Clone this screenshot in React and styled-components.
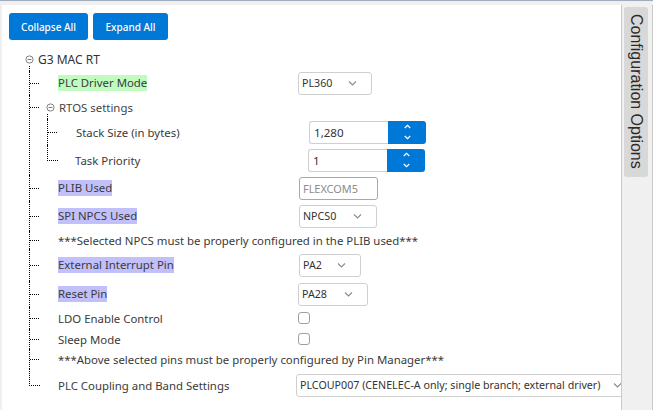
import React from "react";
import styled, { createGlobalStyle } from "styled-components";

const GlobalStyle = createGlobalStyle`
  html, body {
    margin: 0;
    padding: 0;
    background: #fff;
  }
  body {
    font-family: "Noto Sans", "Open Sans", sans-serif;
  }
`;

const Toggle = () => (
  <ToggleIcon width="9" height="9" viewBox="0 0 9 9">
    <circle cx="4.5" cy="4.5" r="3.6" fill="none" stroke="#707070" strokeWidth="0.9" />
    <line x1="2.6" y1="4.5" x2="6.4" y2="4.5" stroke="#707070" strokeWidth="0.9" />
  </ToggleIcon>
);

const Chevron = ({ color = "#8a8a8a", up, w = 9, sw = 1.1 }) => (
  <svg width={w} height="5" viewBox="0 0 9 5">
    <polyline
      points={up ? "1,4.5 4.5,1 8,4.5" : "1,0.5 4.5,4 8,0.5"}
      fill="none"
      stroke={color}
      strokeWidth={sw}
    />
  </svg>
);

const Select = ({ value, width }) => (
  <SelectBox $w={width}>
    <span>{value}</span>
    <Chevron />
  </SelectBox>
);

const Spinner = ({ value }) => (
  <SpinWrap>
    <SpinInput>{value}</SpinInput>
    <SpinButton>
      <Chevron color="#fff" up w={7} sw={1.6} />
      <Chevron color="#fff" w={7} sw={1.6} />
    </SpinButton>
  </SpinWrap>
);

const App = () => {
  return (
    <Frame>
      <GlobalStyle />
      <Panel>
        <Toolbar>
          <Button $w={79}>Collapse All</Button>
          <Button $w={75}>Expand All</Button>
        </Toolbar>

        <Tree>
          <Head $h={24} $root>
            <Toggle />
            <RootLabel>G3 MAC RT</RootLabel>
          </Head>
          <Branch $indent={4}>
            <Item>
              <Head $h={24}>
                <Label $w={240}>
                  <Mark $tone="green">PLC Driver Mode</Mark>
                </Label>
                <Control>
                  <Select value="PL360" width={74} />
                </Control>
              </Head>
            </Item>

            <Item>
              <Head $h={24} $pad={17}>
                <Toggle />
                <GroupLabel>RTOS settings</GroupLabel>
              </Head>
              <Branch $indent={18}>
                <Item>
                  <Head $h={26}>
                    <Label $w={223}>Stack Size (in bytes)</Label>
                    <Control $dx={10}>
                      <Spinner value="1,280" />
                    </Control>
                  </Head>
                </Item>
                <Item $last>
                  <Head $h={30} $last $pad={28}>
                    <Label $w={224}>Task Priority</Label>
                    <Control $dx={9}>
                      <Spinner value="1" />
                    </Control>
                  </Head>
                </Item>
              </Branch>
            </Item>

            <Item>
              <Head $h={26}>
                <Label $w={240}>
                  <Mark $tone="purple">PLIB Used</Mark>
                </Label>
                <Control $dx={1}>
                  <TextBox $w={79}>FLEXCOM5</TextBox>
                </Control>
              </Head>
            </Item>

            <Item>
              <Head $h={30}>
                <Label $w={240}>
                  <Mark $tone="purple">SPI NPCS Used</Mark>
                </Label>
                <Control $dx={1}>
                  <Select value="NPCS0" width={78} />
                </Control>
              </Head>
            </Item>

            <Item>
              <Head $h={18}>
                <Note>***Selected NPCS must be properly configured in the PLIB used***</Note>
              </Head>
            </Item>

            <Item>
              <Head $h={32}>
                <Label $w={240}>
                  <Mark $tone="purple">External Interrupt Pin</Mark>
                </Label>
                <Control $dx={1}>
                  <Select value="PA2" width={62} />
                </Control>
              </Head>
            </Item>

            <Item>
              <Head $h={26}>
                <Label $w={240}>
                  <Mark $tone="purple">Reset Pin</Mark>
                </Label>
                <Control>
                  <Select value="PA28" width={70} />
                </Control>
              </Head>
            </Item>

            <Item>
              <Head $h={22}>
                <Label $w={240}>LDO Enable Control</Label>
                <Control>
                  <Checkbox />
                </Control>
              </Head>
            </Item>

            <Item>
              <Head $h={20}>
                <Label $w={240}>Sleep Mode</Label>
                <Control>
                  <Checkbox />
                </Control>
              </Head>
            </Item>

            <Item>
              <Head $h={20}>
                <Note>***Above selected pins must be properly configured by Pin Manager***</Note>
              </Head>
            </Item>

            <Item $last>
              <Head $h={32} $last>
                <Label $w={240}>PLC Coupling and Band Settings</Label>
                <Control $dx={-2}>
                  <Select
                    value="PLCOUP007 (CENELEC-A only; single branch; external driver)"
                    width={341}
                  />
                </Control>
              </Head>
            </Item>
          </Branch>
        </Tree>
      </Panel>

      <Sidebar>
        <SideTab>Configuration Options</SideTab>
      </Sidebar>
    </Frame>
  );
};

const Frame = styled.div`
  width: 653px;
  height: 410px;
  box-sizing: border-box;
  display: flex;
  background: #f0f0f0;
  border-top: 1px solid #9eacbd;
  padding: 4px 0 0 2px;
  overflow: hidden;
`;

const Panel = styled.div`
  width: 620px;
  flex: none;
  box-sizing: border-box;
  background: #fff;
  border-right: 1px solid #c9c9c9;
  padding: 8px 0 0 7px;
  overflow: hidden;
`;

const Toolbar = styled.div`
  display: flex;
  gap: 5px;
`;

const Button = styled.button`
  width: ${(p) => p.$w}px;
  height: 27px;
  border: none;
  border-radius: 3px;
  background: #0078d7;
  color: #fff;
  font-family: "Noto Sans", "Open Sans", sans-serif;
  font-size: 10px;
  font-weight: 500;
  padding: 0;
`;

const Tree = styled.div`
  margin-top: 7px;
  margin-left: 16px;
  color: #3a3a3a;
  font-size: 11.4px;
`;

const ToggleIcon = styled.svg`
  flex: none;
  margin-top: 1px;
`;

const Branch = styled.div`
  position: relative;
  margin-left: ${(p) => p.$indent}px;

  &::before {
    content: "";
    position: absolute;
    left: 0;
    top: -5px;
    height: 5px;
    border-left: 1px dotted #000;
  }
`;

const Item = styled.div`
  position: relative;

  &::after {
    content: "";
    display: ${(p) => (p.$last ? "none" : "block")};
    position: absolute;
    left: 0;
    top: 0;
    bottom: 0;
    border-left: 1px dotted #000;
  }
`;

const Head = styled.div`
  position: relative;
  height: ${(p) => p.$h}px;
  display: flex;
  align-items: center;
  box-sizing: border-box;
  padding-left: ${(p) => (p.$root ? 0 : p.$pad ?? 29)}px;
  gap: ${(p) => (p.$pad === 17 || p.$root ? 4 : 0)}px;

  &::before {
    content: "";
    display: ${(p) => (p.$root ? "none" : "block")};
    position: absolute;
    left: ${(p) => (p.$last ? 0 : 1)}px;
    top: 0;
    height: 50%;
    width: ${(p) => (p.$last ? 10 : 9)}px;
    border-bottom: 1px dotted #000;
    border-left: ${(p) => (p.$last ? "1px dotted #000" : "none")};
  }
`;

const RootLabel = styled.span`
  font-size: 12px;
  color: #333;
`;

const GroupLabel = styled.span`
  color: #444;
`;

const Label = styled.div`
  flex: none;
  width: ${(p) => p.$w}px;
  white-space: nowrap;
`;

const Note = styled.div`
  white-space: nowrap;
`;

const Mark = styled.span`
  background: ${(p) => (p.$tone === "green" ? "#c0fcc0" : "#c2c0fa")};
  line-height: 16px;
  display: inline-block;
`;

const Control = styled.div`
  flex: none;
  margin-left: ${(p) => p.$dx || 0}px;
  display: flex;
  align-items: center;
`;

const SelectBox = styled.div`
  width: ${(p) => p.$w}px;
  height: 23px;
  box-sizing: border-box;
  border: 1px solid #cfcfcf;
  border-radius: 3px;
  display: flex;
  align-items: center;
  justify-content: space-between;
  padding: 0 14px 0 3px;
  color: #333;
  font-size: 10.7px;
  white-space: nowrap;
`;

const TextBox = styled.div`
  width: ${(p) => p.$w}px;
  height: 23px;
  box-sizing: border-box;
  border: 1px solid #a8a8a8;
  border-radius: 3px;
  display: flex;
  align-items: center;
  padding-left: 3px;
  color: #8c8c8c;
  font-size: 10.9px;
`;

const SpinWrap = styled.div`
  display: flex;
  height: 23px;
`;

const SpinInput = styled.div`
  width: 79px;
  box-sizing: border-box;
  border: 1px solid #cfcfcf;
  border-right: none;
  border-radius: 3px 0 0 3px;
  display: flex;
  align-items: center;
  padding-left: 4px;
  color: #333;
  font-size: 11.6px;
`;

const SpinButton = styled.div`
  width: 38px;
  background: #0078d7;
  border-radius: 0 3px 3px 0;
  display: flex;
  flex-direction: column;
  align-items: center;
  justify-content: center;
  gap: 6px;
`;

const Checkbox = styled.div`
  width: 12px;
  height: 12px;
  box-sizing: border-box;
  border: 1px solid #a0a0a0;
  border-radius: 3px;
  background: #fff;
`;

const Sidebar = styled.div`
  flex: 1;
  border-right: 1px solid #c9c9c9;
  padding: 2px 0 0 2px;
`;

const SideTab = styled.div`
  width: 24px;
  height: 170px;
  box-sizing: border-box;
  background: #d8d8d8;
  border-radius: 3px;
  writing-mode: vertical-rl;
  font-family: "Liberation Sans", Arial, sans-serif;
  font-size: 16px;
  color: #2a2a2a;
  padding-top: 7px;
  display: flex;
  align-items: center;
  white-space: nowrap;
`;

export default App;
